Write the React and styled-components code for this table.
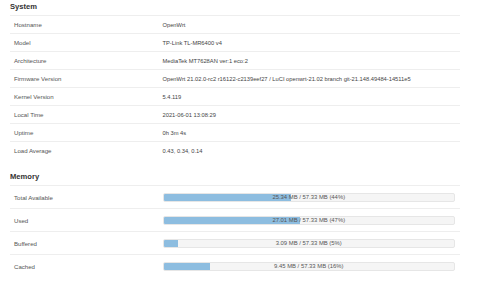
import React from "react";
import styled, { createGlobalStyle } from "styled-components";

const Global = createGlobalStyle`
  html, body { margin: 0; padding: 0; background: #fff; }
  body {
    font-family: "Liberation Sans", Arial, sans-serif;
    color: #404040;
  }
`;

const Page = styled.div`
  padding: 0 20px 0 10px;
  width: 450px;
`;

const Section = styled.section`
  margin-bottom: ${(p) => p.$gap || 0}px;
`;

const Title = styled.h2`
  margin: 0 0 3px 0;
  padding-top: 1px;
  height: 11px;
  font-size: 7.6px;
  line-height: 12px;
  font-weight: bold;
  color: #333;
`;

const Table = styled.div`
  display: flex;
  flex-direction: column;
`;

const Row = styled.div`
  display: grid;
  grid-template-columns: 33% 1fr;
  border-top: 1px solid #eee;
  height: ${(p) => p.$h}px;
  box-sizing: border-box;
  align-items: center;
`;

const Label = styled.div`
  padding: 0 4px;
  font-size: 6.1px;
  color: #555;
  white-space: nowrap;
`;

const Value = styled.div`
  padding: 0 5px 0 4px;
  font-size: 5.75px;
  color: #444;
  white-space: nowrap;
`;

const Bar = styled.div`
  position: relative;
  height: 9px;
  background: #f5f5f5;
  border: 1px solid #e6e6e6;
  border-radius: 2px;
  box-sizing: border-box;
  overflow: hidden;
`;

const Fill = styled.div`
  position: absolute;
  left: 0;
  top: 0;
  bottom: 0;
  background: #8dbde0;
`;

const BarText = styled.div`
  position: absolute;
  inset: 0;
  display: flex;
  align-items: center;
  justify-content: center;
  font-size: 5.9px;
  color: #555;
  white-space: nowrap;
`;

const system = [
  ["Hostname", "OpenWrt"],
  ["Model", "TP-Link TL-MR6400 v4"],
  ["Architecture", "MediaTek MT7628AN ver:1 eco:2"],
  ["Firmware Version", "OpenWrt 21.02.0-rc2 r16122-c2139eef27 / LuCI openwrt-21.02 branch git-21.148.49484-14511e5"],
  ["Kernel Version", "5.4.119"],
  ["Local Time", "2021-06-01 13:08:29"],
  ["Uptime", "0h 3m 4s"],
  ["Load Average", "0.43, 0.34, 0.14"],
];

const memory = [
  ["Total Available", 25.34, 44],
  ["Used", 27.01, 47],
  ["Buffered", 3.09, 5],
  ["Cached", 9.45, 16],
];

export default function App() {
  return (
    <>
      <Global />
      <Page>
        <Section $gap={11}>
          <Title>System</Title>
          <Table>
            {system.map(([k, v]) => (
              <Row key={k} $h={18}>
                <Label>{k}</Label>
                <Value>{v}</Value>
              </Row>
            ))}
          </Table>
        </Section>
        <Section>
          <Title>Memory</Title>
          <Table>
            {memory.map(([k, mb, pct]) => (
              <Row key={k} $h={23}>
                <Label>{k}</Label>
                <Value>
                  <Bar>
                    <Fill style={{ width: `${pct}%` }} />
                    <BarText>{`${mb.toFixed(2)} MB / 57.33 MB (${pct}%)`}</BarText>
                  </Bar>
                </Value>
              </Row>
            ))}
          </Table>
        </Section>
      </Page>
    </>
  );
}
